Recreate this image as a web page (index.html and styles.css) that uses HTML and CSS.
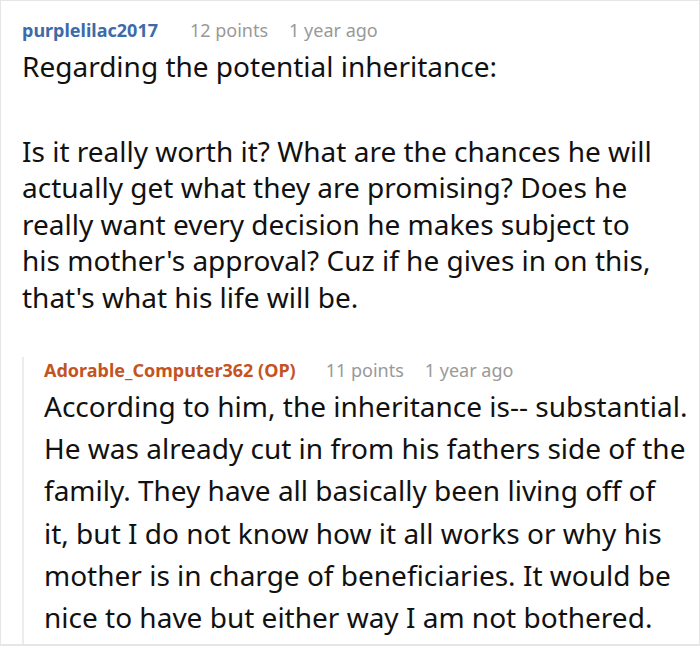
FILE: index.html
```html
<!DOCTYPE html>
<html>
<head>
<meta charset="utf-8">
<link rel="stylesheet" href="styles.css">
</head>
<body>
<div class="thread">
  <div class="comment">
    <div class="meta">
      <span class="author">purplelilac2017</span>
      <span class="info">12 points</span>
      <span class="info">1 year ago</span>
    </div>
    <div class="body">
      <p>Regarding the potential inheritance:</p>
      <p>Is it really worth it? What are the chances he will actually get what they are promising? Does he really want every decision he makes subject to his mother's approval? Cuz if he gives in on this, that's what his life will be.</p>
    </div>
    <div class="reply">
      <div class="meta">
        <span class="author op">Adorable_Computer362 (OP)</span>
        <span class="info">11 points</span>
        <span class="info">1 year ago</span>
      </div>
      <div class="body">
        <p>According to him, the inheritance is-- substantial. He was already cut in from his fathers side of the family. They have all basically been living off of<br>it, but I do not know how it all works or why his mother is in charge of beneficiaries. It would be nice to have but either way I am not bothered.</p>
      </div>
    </div>
  </div>
</div>
</body>
</html>
```

FILE: styles.css
```css
html, body {
  margin: 0;
  padding: 0;
  background: #fff;
}
body {
  font-family: "Noto Sans", sans-serif;
  color: #111;
}
.thread {
  width: 700px;
  height: 646px;
  box-sizing: border-box;
  border: 1px solid #e6e6e6;
  border-bottom-width: 2px;
  overflow: hidden;
}
.comment {
  padding: 16px 8px 0 21px;
}
.meta {
  display: flex;
  gap: 21px;
  font-size: 18px;
  line-height: 26px;
  margin-bottom: 5px;
}
.author {
  font-weight: 700;
  color: #3d6aa8;
  margin-right: 11px;
}
.author.op {
  color: #c4541f;
}
.info {
  color: #999;
}
.body {
  font-size: 28px;
  line-height: 36.5px;
}
.comment > .body {
  margin-right: 30px;
}
.body p {
  margin: 0;
}
.body p + p {
  margin-top: 48px;
}
.reply {
  margin-top: 42px;
  border-left: 2px solid #ececec;
  padding-left: 20px;
  padding-bottom: 6px;
}
.reply .meta {
  margin-bottom: 2px;
}
.reply .author {
  margin-right: 9px;
}
.reply .body {
  line-height: 42.2px;
}
```
